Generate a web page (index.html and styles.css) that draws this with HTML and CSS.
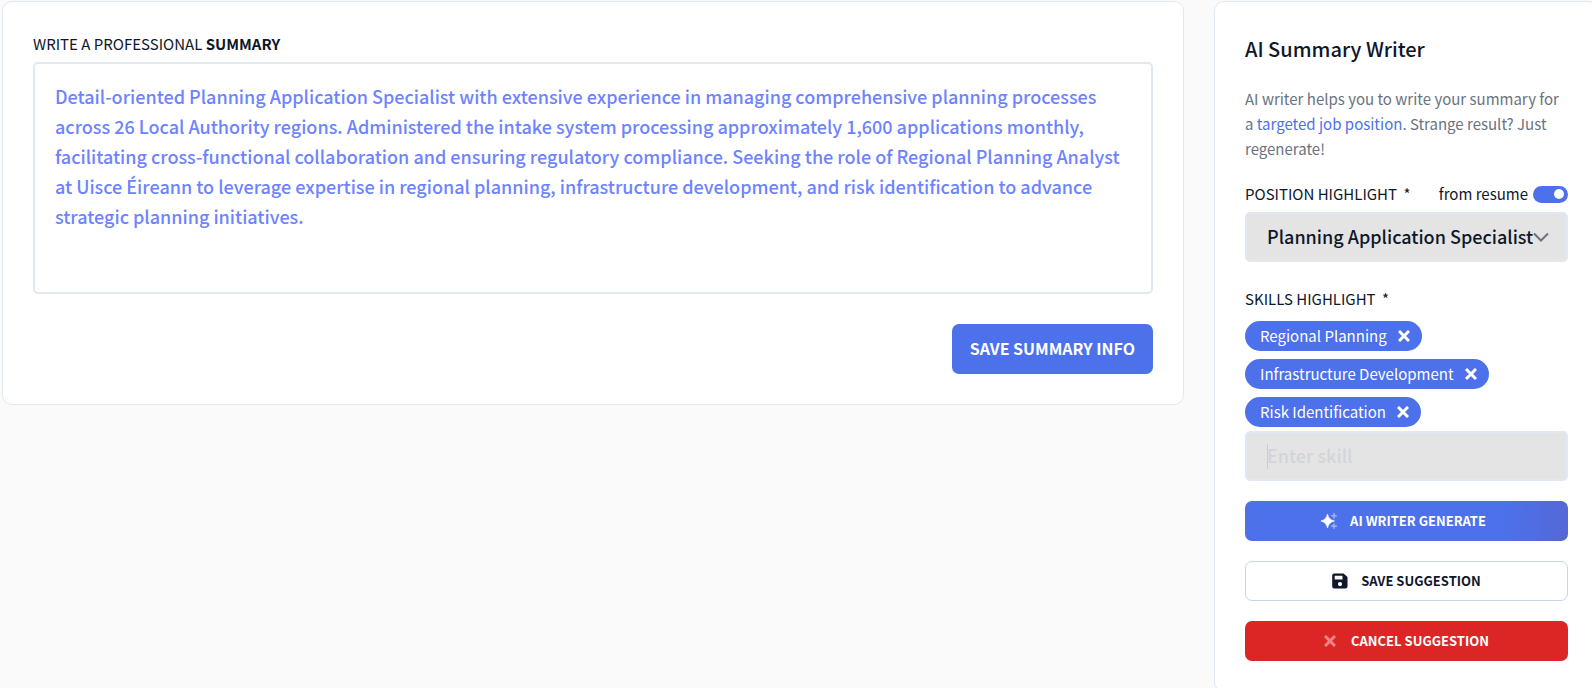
FILE: index.html
```
<!DOCTYPE html>
<html lang="en">
<head>
    <meta charset="UTF-8">
    <title>Professional Summary</title>
    <link rel="stylesheet" href="styles.css">
</head>
<body>
<div class="page">

    <!-- summary editor -->
    <form class="card editor">
        <label class="label" for="summary">WRITE A PROFESSIONAL <b>SUMMARY</b></label>
        <textarea id="summary" class="summary" spellcheck="false">Detail-oriented Planning Application Specialist with extensive experience in managing comprehensive planning processes across 26 Local Authority regions. Administered the intake system processing approximately 1,600 applications monthly, facilitating cross-functional collaboration and ensuring regulatory compliance. Seeking the role of Regional Planning Analyst at Uisce Éireann to leverage expertise in regional planning, infrastructure development, and risk identification to advance strategic planning initiatives.</textarea>
        <button type="button" class="save">SAVE SUMMARY INFO</button>
    </form>

    <!-- ai writer -->
    <aside class="card writer">
        <h2>AI Summary Writer</h2>
        <p class="hint">AI writer helps you to write your summary for a <a href="#">targeted job position</a>. Strange result? Just regenerate!</p>

        <div class="row">
            <label class="label" for="position">POSITION HIGHLIGHT <span class="req">*</span></label>
            <label class="switch">from resume <input type="checkbox" checked></label>
        </div>
        <div class="select">
            <select id="position" class="field">
                <option>Planning Application Specialist</option>
            </select>
            <svg class="arrow" viewBox="0 0 16 16" width="16" height="16" fill="none" stroke="#6b7280" stroke-width="2"><path d="M1 4.5l7 7 7-7"/></svg>
        </div>

        <label class="label skills-label" for="skill">SKILLS HIGHLIGHT <span class="req">*</span></label>
        <ul class="chips">
            <li>Regional Planning <button type="button" aria-label="Remove"><svg viewBox="0 0 12 12" width="12" height="12"><path d="M1 1l10 10M11 1l-10 10"/></svg></button></li>
            <li>Infrastructure Development <button type="button" aria-label="Remove"><svg viewBox="0 0 12 12" width="12" height="12"><path d="M1 1l10 10M11 1l-10 10"/></svg></button></li>
            <li>Risk Identification <button type="button" aria-label="Remove"><svg viewBox="0 0 12 12" width="12" height="12"><path d="M1 1l10 10M11 1l-10 10"/></svg></button></li>
        </ul>
        <input id="skill" class="field" type="text" placeholder="Enter skill">

        <div class="actions">
            <button type="button" class="btn generate">
                <svg viewBox="0 0 16 16" width="16" height="16" fill="#fff"><path d="M6.500 1.200Q7.700 6.800 13.300 8 7.700 9.200 6.500 14.800 5.300 9.200 0 8 5.300 6.800 6.500 1.200z" stroke="#fff" stroke-width=".8" stroke-linejoin="round"/><path opacity=".45" d="M12.200 0h1.600v1.900h2v1.600h-2v1.900h-1.600V3.500h-2V1.900h2zM12.200 10.400h1.600v1.900h2v1.600h-2v1.900h-1.600v-1.900h-2v-1.600h2z"/></svg>
                AI WRITER GENERATE
            </button>
            <button type="button" class="btn suggest">
                <svg viewBox="0 0 16 16" width="16" height="16"><path fill="#0f172a" fill-rule="evenodd" d="M2.200.5h9.400L15.500 4v9.500a2 2 0 0 1-2 2H2.200a2 2 0 0 1-2-2v-11a2 2 0 0 1 2-2zM2.700 2.800v3.700h7.800V2.800zM8 9a2.100 2.100 0 1 0 0 4.200A2.100 2.100 0 0 0 8 9z"/></svg>
                SAVE SUGGESTION
            </button>
            <button type="button" class="btn cancel">
                <svg viewBox="0 0 12 12" width="12" height="12"><path d="M1 1l10 10M11 1l-10 10"/></svg>
                CANCEL SUGGESTION
            </button>
        </div>
    </aside>
</div>
</body>
</html>
```
FILE: styles.css
```
*{
    box-sizing: border-box;
    margin: 0;
    padding: 0;
}
body{
    overflow: hidden;
    background: #fafafa;
    color: #0f172a;
    font-family: "Noto Sans CJK SC", "Noto Sans", sans-serif;
    font-size: 15px;
    line-height: 24px;
}
button, input, select, textarea{
    font-family: inherit;
    color: inherit;
}
button{
    border: 0;
    cursor: pointer;
}
.page{
    display: grid;
    grid-template-columns: minmax(0, 1fr) 385px;
    align-items: start;
    gap: 30px;
    margin: 1px -7px 0 2px;
}
.card{
    display: flex;
    flex-direction: column;
    padding: 30px;
    background: #fff;
    border: 1px solid #e2e8f0;
    border-radius: 10px;
}

/* editor */
.label{
    line-height: 24px;
}
.editor .label{
    margin-bottom: 6px;
}
.summary{
    display: block;
    width: 100%;
    height: 232px;
    padding: 17px 20px;
    background: #fff;
    border: 2px solid #e2e8f0;
    border-radius: 5px;
    outline: 0;
    resize: none;
    color: #6d83ff;
    font-size: 18px;
    font-weight: 500;
    line-height: 30px;
}
.save{
    align-self: flex-end;
    height: 50px;
    margin-top: 30px;
    padding: 0 18px 2px;
    background: #4c71ea;
    border-radius: 7px;
    color: #fff;
    font-size: 16px;
    font-weight: 700;
}

/* writer */
.writer h2{
    font-size: 20px;
    font-weight: 500;
    line-height: 34px;
}
.hint{
    margin-top: 20px;
    color: #6b7280;
    line-height: 25px;
}
.hint a{
    color: #4c71ea;
    text-decoration: none;
}
.row{
    display: flex;
    justify-content: space-between;
    margin: 21px 0 6px;
}
.req{
    margin-left: 3px;
}
.switch{
    display: flex;
    align-items: center;
    gap: 5px;
}
.switch input{
    display: flex;
    align-items: center;
    justify-content: flex-end;
    width: 35px;
    height: 17px;
    padding: 0 4px;
    appearance: none;
    background: #4c71ea;
    border-radius: 9px;
}
.switch input::before{
    content: "";
    width: 10px;
    height: 10px;
    background: #fff;
    border-radius: 50%;
}
.field{
    display: block;
    width: 100%;
    height: 50px;
    padding: 0 20px 2px;
    appearance: none;
    background: #e4e4e4;
    border: 2px solid #e2e8f0;
    border-radius: 5px;
    outline: 0;
    font-size: 18px;
    font-weight: 500;
}
.field::placeholder{
    color: #d1d5db;
}
/* thin cursor in front of the placeholder */
input.field:placeholder-shown{
    background: #e4e4e4 linear-gradient(#cbcbd0, #cbcbd0) 20px center / 1px 25px no-repeat;
}
.select{
    position: relative;
}
.select .arrow{
    position: absolute;
    top: 17px;
    right: 19px;
}
.skills-label{
    margin-top: 25px;
}
.chips{
    display: flex;
    flex-direction: column;
    align-items: flex-start;
    gap: 8px;
    margin: 10px 0 4px;
    list-style: none;
}
.chips li{
    display: flex;
    align-items: center;
    gap: 11px;
    height: 30px;
    padding: 0 12px 0 15px;
    background: #4c71ea;
    border-radius: 15px;
    color: #fff;
}
.chips button{
    display: flex;
    background: none;
}
.chips path, .cancel path{
    fill: none;
    stroke: #fff;
    stroke-width: 3;
}
.actions{
    display: flex;
    flex-direction: column;
    gap: 20px;
    margin-top: 20px;
}
.btn{
    display: flex;
    align-items: center;
    justify-content: center;
    gap: 13px;
    height: 40px;
    padding-bottom: 1px;
    border-radius: 7px;
    color: #fff;
    font-size: 13px;
    font-weight: 700;
}
.generate{
    padding-right: 6px;
    background: linear-gradient(90deg, #4c71ea 80%, #5468d8);
}
.suggest{
    background: #fff;
    border: 1px solid #cbd5e1;
    color: #0f172a;
}
.cancel{
    gap: 15px;
    background: #dc2626;
}
.cancel path{
    stroke: #ee8484;
}
```
